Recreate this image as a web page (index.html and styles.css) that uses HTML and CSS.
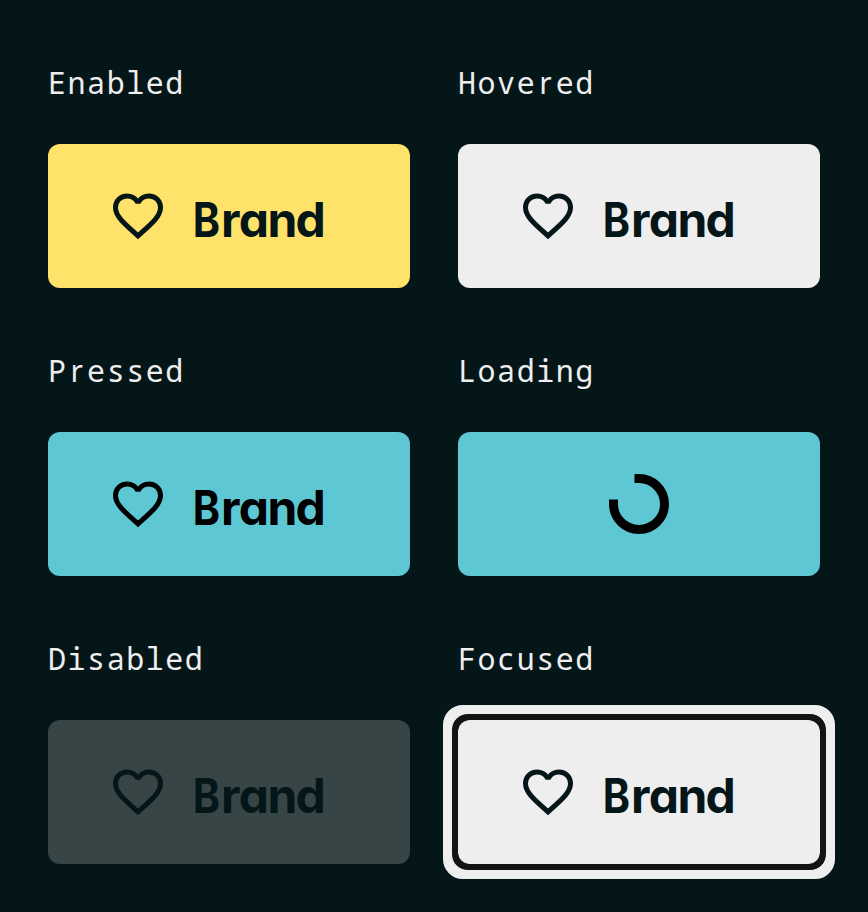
FILE: index.html
```html
<!DOCTYPE html>
<html lang="en">
<head>
<meta charset="utf-8">
<title>Brand button states</title>
<link rel="stylesheet" href="styles.css">
</head>
<body>
<svg class="defs" aria-hidden="true"><symbol id="heart" viewBox="0 0 50 48"><path d="M25 43.800C11.500 31.800 2.500 24.500 2.500 15.500C2.500 8.800 7.500 3.900 14 3.900C18 3.900 22 6 24 9.300H26C28 6 32 3.900 36 3.900C42.500 3.900 47.500 8.800 47.500 15.500C47.500 24.500 38.500 31.800 25 43.800Z"/></symbol></svg>
<main class="states">
<section class="state"><h2 class="label">Enabled</h2><button class="button enabled"><svg class="heart"><use href="#heart"/></svg><span class="text"><span class="initial">B</span>rand</span></button></section>
<section class="state"><h2 class="label">Hove<span class="plain">r</span>ed</h2><button class="button hovered"><svg class="heart"><use href="#heart"/></svg><span class="text"><span class="initial">B</span>rand</span></button></section>
<section class="state"><h2 class="label">P<span class="plain">r</span>essed</h2><button class="button pressed"><svg class="heart"><use href="#heart"/></svg><span class="text"><span class="initial">B</span>rand</span></button></section>
<section class="state"><h2 class="label">Loading</h2><button class="button loading" aria-label="Loading"><svg class="spinner" viewBox="0 0 60 60"><path d="M25.500 4.500H30A25.500 25.500 0 1 1 4.500 30V25.500"/></svg></button></section>
<section class="state"><h2 class="label">Disabled</h2><button class="button disabled" disabled><svg class="heart"><use href="#heart"/></svg><span class="text"><span class="initial">B</span>rand</span></button></section>
<section class="state"><h2 class="label">Focused</h2><button class="button focused"><svg class="heart"><use href="#heart"/></svg><span class="text"><span class="initial">B</span>rand</span></button></section>
</main>
</body>
</html>
```
FILE: styles.css
```css
* { box-sizing: border-box; }
body { margin: 0; background: #051619; }
.defs { display: none; }
.states { display: grid; grid-template-columns: 362px 362px; gap: 48px; padding: 48px; }
.state { height: 240px; }
.label { height: 72px; margin: 0 0 24px; color: #eee; font: 400 30px/70px "Noto Sans Mono", "DejaVu Sans Mono", monospace; letter-spacing: 1.55px; }
.plain { display: inline-block; width: 19.550px; padding-left: 3px; font-family: "Noto Sans", sans-serif; letter-spacing: 0; }
.button { position: relative; display: flex; align-items: center; width: 362px; height: 144px; margin: 0; padding: 0 0 0 65px; border: 0; border-radius: 12px; color: #051619; background: #eee; }
.heart { width: 50px; height: 48px; fill: none; stroke: currentColor; stroke-width: 5; stroke-miterlimit: 10; }
.text { margin: 8px 0 0 29px; font: 700 48px/72px Inter, sans-serif; font-feature-settings: "cv11"; font-kerning: none; letter-spacing: -1.700px; }
.initial { display: inline-block; width: 29px; letter-spacing: 0; transform: scaleX(.86); transform-origin: 6px 50%; }
.enabled { background: #ffe269; }
.pressed, .loading { color: #000; background: #5dc8d4; }
.loading { justify-content: center; padding: 0; }
.spinner { width: 60px; height: 60px; fill: none; stroke: currentColor; stroke-width: 9; }
.disabled { background: #384546; }
.focused::before, .focused::after { content: ""; position: absolute; pointer-events: none; }
.focused::before { inset: -15px; border: 10px solid #eee; border-radius: 20px; }
.focused::after { inset: -6px; border: 6px solid #141414; border-radius: 16px; box-shadow: 0 0 0 2px #eee; }
```
